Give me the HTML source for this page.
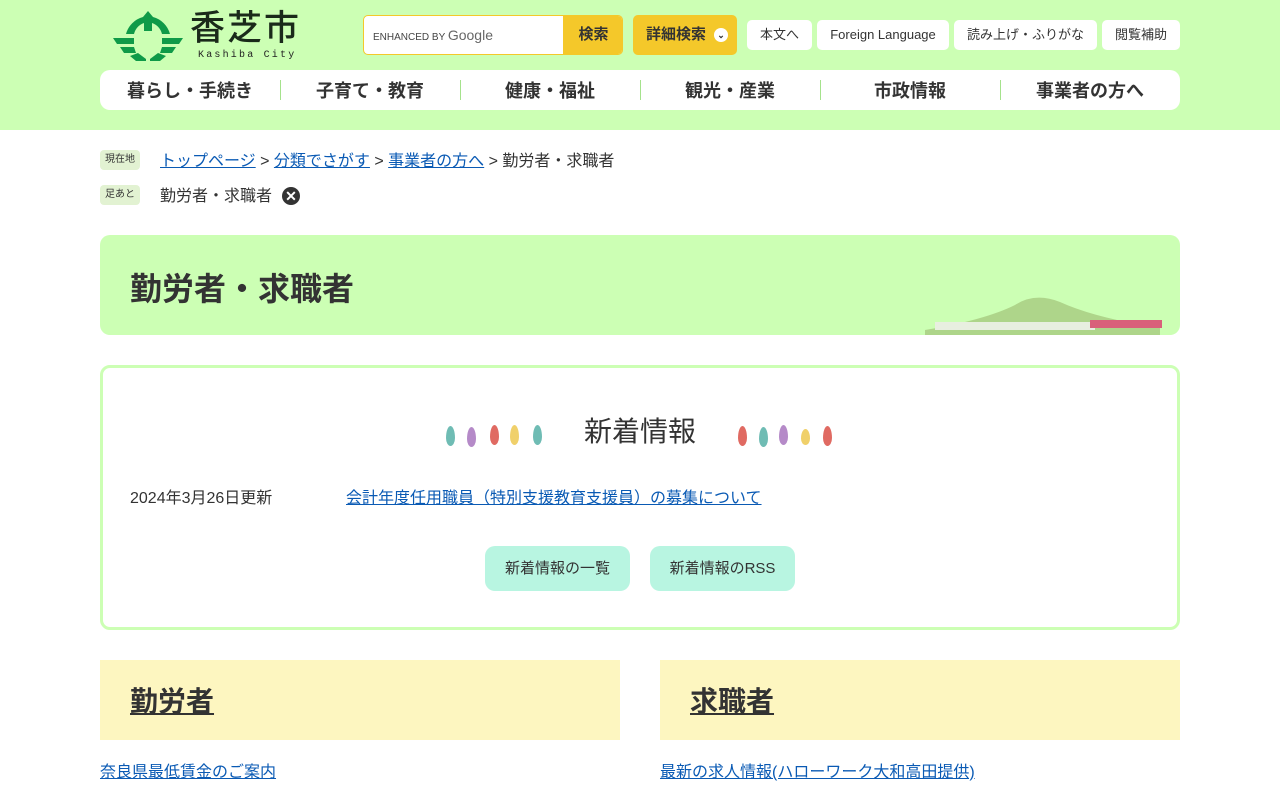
<!DOCTYPE html>
<html><head><meta charset="utf-8">
<style>
*{box-sizing:border-box;margin:0;padding:0}
body{width:1280px;height:800px;overflow:hidden;background:#fff;font-family:"Liberation Sans","Noto Sans CJK JP",sans-serif;color:#333}
.hd{position:absolute;left:0;top:0;width:1280px;height:130px;background:#ccffb4}
.abs{position:absolute}
a{color:#0a5ab4}
.btn{position:absolute;top:20px;height:30px;background:#fff;border-radius:5px;font-size:13px;line-height:30px;text-align:center;color:#333}
.nav{position:absolute;left:100px;top:70px;width:1080px;height:40px;background:#fff;border-radius:10px;display:flex}
.nav div{flex:1;text-align:center;font-size:18px;font-weight:bold;line-height:42px;position:relative}
.nav div+div:before{content:"";position:absolute;left:0;top:10px;height:20px;border-left:1px solid #a5e28c}
.tag{position:absolute;left:100px;width:40px;height:20px;background:#e2f2d2;border-radius:4px;font-size:10px;line-height:20px;text-align:center}
.leaf{position:absolute;width:9px;height:20px;border-radius:50% 50% 50% 50%/60% 60% 40% 40%}
</style></head><body>
<div class="hd"></div>
<svg class="abs" style="left:112px;top:9px" width="72" height="52" viewBox="0 0 72 52">
<path d="M36 2 L41 8 A24 24 0 0 1 58 25 L50 25 A16 16 0 0 0 40 14 L40 22 L32 22 L32 14 A16 16 0 0 0 22 25 L14 25 A24 24 0 0 1 31 8 Z" fill="#0f9a48"/>
<path d="M1 29 L22 29 L22 35 L5 35 Z M71 29 L50 29 L50 35 L67 35 Z M8 38 L22 38 L24 44 L12 44 Z M64 38 L50 38 L48 44 L60 44 Z M18 47 L26 44 L34 50 L34 52 L24 52 Z M54 47 L46 44 L38 50 L38 52 L48 52 Z" fill="#0f9a48"/>
</svg>
<div class="abs" style="left:190px;top:9px;font-size:35px;line-height:40px;color:#1a2a1a;font-weight:500;letter-spacing:2px">香芝市</div>
<div class="abs" style="left:198px;top:50px;font-size:10px;letter-spacing:2.2px;font-family:'Liberation Mono',monospace;color:#222">Kashiba City</div>
<div class="abs" style="left:363px;top:15px;width:260px;height:40px;border:1px solid #f4c82a;border-radius:5px;background:#fff;overflow:hidden">
<span class="abs" style="left:9px;top:11px;font-size:10px;color:#444">ENHANCED BY <span style="font-size:14px;color:#666">Google</span></span>
<div class="abs" style="left:199px;top:0;width:61px;height:40px;background:#f4c82a;font-weight:bold;font-size:15px;line-height:38px;text-align:center">検索</div></div>
<div class="abs" style="left:633px;top:15px;width:104px;height:40px;background:#f4c82a;border-radius:5px;font-weight:bold;font-size:15px;line-height:40px;padding-left:13px">詳細検索<span style="position:absolute;right:9px;top:13px;width:14px;height:14px;border-radius:50%;background:#fff;font-size:9px;line-height:14px;text-align:center">⌄</span></div>
<div class="btn" style="left:747px;width:65px">本文へ</div>
<div class="btn" style="left:817px;width:132px">Foreign Language</div>
<div class="btn" style="left:954px;width:143px">読み上げ・ふりがな</div>
<div class="btn" style="left:1102px;width:78px">閲覧補助</div>
<div class="nav"><div>暮らし・手続き</div><div>子育て・教育</div><div>健康・福祉</div><div>観光・産業</div><div>市政情報</div><div>事業者の方へ</div></div>

<div class="tag" style="top:150px">現在地</div>
<div class="abs" style="left:160px;top:150px;font-size:16px;line-height:24px"><a href="#">トップページ</a> &gt; <a href="#">分類でさがす</a> &gt; <a href="#">事業者の方へ</a> &gt; 勤労者・求職者</div>
<div class="tag" style="top:185px">足あと</div>
<div class="abs" style="left:160px;top:185px;font-size:16px;line-height:24px">勤労者・求職者</div>
<div class="abs" style="left:282px;top:187px;width:18px;height:18px;border-radius:50%;background:#333;color:#fff;font-size:14px;font-weight:bold;line-height:18px;text-align:center">✕</div>

<div class="abs" style="left:100px;top:235px;width:1080px;height:100px;background:#ccffb4;border-radius:10px;overflow:hidden">
<div class="abs" style="left:30px;top:29px;font-size:32px;font-weight:bold;color:#333">勤労者・求職者</div>
<svg class="abs" style="left:815px;top:55px" width="250" height="45"><path d="M10 40 Q70 30 100 15 Q120 2 145 12 Q180 28 245 38 L245 45 L10 45Z" fill="#aed58a"/><rect x="20" y="32" width="160" height="8" fill="#e8efe0"/><rect x="175" y="30" width="72" height="8" fill="#d9607a"/></svg>
</div>

<div class="abs" style="left:100px;top:365px;width:1080px;height:265px;border:3px solid #ccffb4;border-radius:10px"></div>
<div class="abs" style="left:584px;top:410px;font-size:28px;color:#333">新着情報</div>
<div class="leaf" style="left:446px;top:426px;background:#6fbcb4"></div>
<div class="leaf" style="left:467px;top:427px;background:#b58ac8"></div>
<div class="leaf" style="left:490px;top:425px;background:#e06a62"></div>
<div class="leaf" style="left:510px;top:425px;background:#f0d06a"></div>
<div class="leaf" style="left:533px;top:425px;background:#6fbcb4"></div>
<div class="leaf" style="left:738px;top:426px;background:#e06a62"></div>
<div class="leaf" style="left:759px;top:427px;background:#6fbcb4"></div>
<div class="leaf" style="left:779px;top:425px;background:#b58ac8"></div>
<div class="leaf" style="left:801px;top:429px;background:#f0d06a;height:16px"></div>
<div class="leaf" style="left:823px;top:426px;background:#e06a62"></div>
<div class="abs" style="left:130px;top:487px;font-size:16px;line-height:24px">2024年3月26日更新</div>
<div class="abs" style="left:346px;top:487px;font-size:16px;line-height:24px"><a href="#">会計年度任用職員（特別支援教育支援員）の募集について</a></div>
<div class="abs" style="left:485px;top:546px;width:145px;height:45px;background:#b8f5e1;border-radius:10px;font-size:15px;line-height:45px;text-align:center">新着情報の一覧</div>
<div class="abs" style="left:650px;top:546px;width:145px;height:45px;background:#b8f5e1;border-radius:10px;font-size:15px;line-height:45px;text-align:center">新着情報のRSS</div>

<div class="abs" style="left:100px;top:660px;width:520px;height:80px;background:#fdf6c0"><a href="#" style="position:absolute;left:30px;top:20px;font-size:28px;font-weight:bold;color:#333">勤労者</a></div>
<div class="abs" style="left:660px;top:660px;width:520px;height:80px;background:#fdf6c0"><a href="#" style="position:absolute;left:30px;top:20px;font-size:28px;font-weight:bold;color:#333">求職者</a></div>
<div class="abs" style="left:100px;top:761px;font-size:16px;line-height:24px"><a href="#">奈良県最低賃金のご案内</a></div>
<div class="abs" style="left:660px;top:761px;font-size:16px;line-height:24px"><a href="#">最新の求人情報(ハローワーク大和高田提供)</a></div>
</body></html>
